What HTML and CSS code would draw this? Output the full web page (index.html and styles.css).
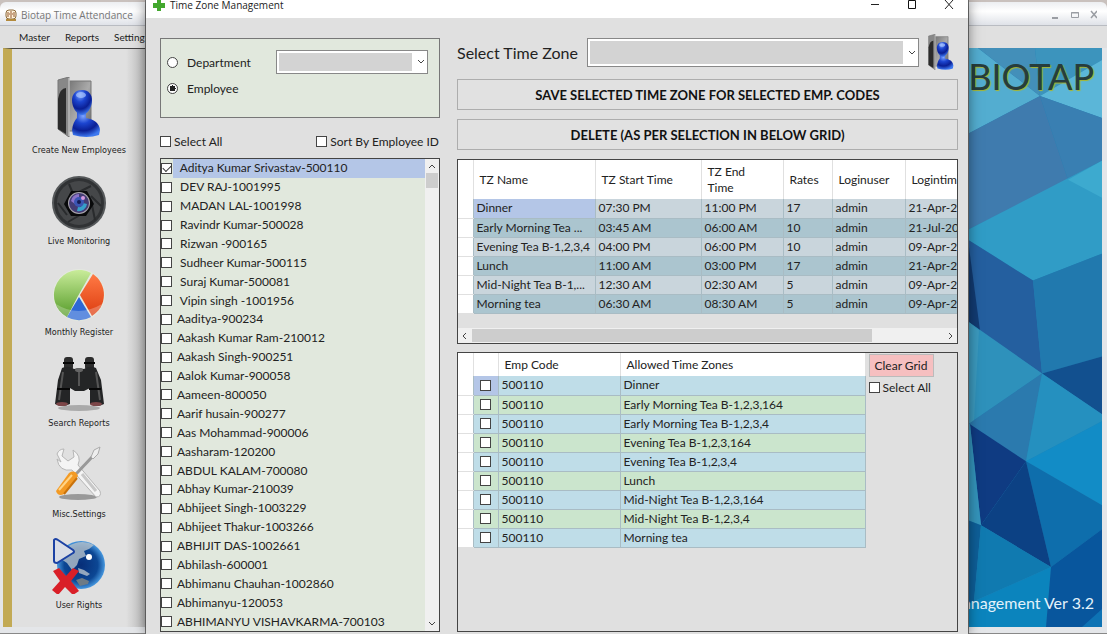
FILE: index.html
```html
<!DOCTYPE html>
<html lang="en">
<head>
    <meta charset="UTF-8">
    <meta name="viewport" content="width=device-width, initial-scale=1.0">
    <title>Time Zone Management</title>
    <link rel="stylesheet" href="styles.css">
</head>
<body>

    <!-- Shared icons -->
    <svg class="defs" width="0" height="0" aria-hidden="true">
        <defs>
            <linearGradient id="metal" x1="0" x2="1" y1="0" y2="1">
                <stop offset="0" stop-color="#777"/><stop offset=".5" stop-color="#aaa"/><stop offset="1" stop-color="#666"/>
            </linearGradient>
            <radialGradient id="blue" cx=".4" cy=".2" r=".8">
                <stop offset="0" stop-color="#7fa6ff"/><stop offset=".35" stop-color="#1c45d0"/><stop offset=".7" stop-color="#0a1f94"/><stop offset="1" stop-color="#3d78f0"/>
            </radialGradient>
        </defs>
        <symbol id="user" viewBox="0 0 44 60">
            <path d="M12 4H34V54H12z" fill="url(#metal)" stroke="#777"/>
            <path d="M1 3L12 0V60L1 52z" fill="#888" stroke="#777"/>
            <path d="M1 22Q3 11 9 11V57L1 52z" fill="#2b2b2b"/>
            <path d="M12 1V59" stroke="#ddd"/>
            <path d="M20 34h9v7q13 2 14 12l-1 5q-12 4-26 0l-1-5q1-8 5-12z" fill="url(#blue)"/>
            <path d="M25 13c7 0 10 5 10 10 0 8-5 15-10 15s-10-7-10-15c0-5 3-10 10-10z" fill="url(#blue)"/>
            <ellipse cx="24" cy="18" rx="5" ry="3" fill="#a9c4ff" opacity=".7"/>
        </symbol>
    </svg>

    <!-- Main application window -->
    <div class="app">
        <header class="app-title">
            <svg width="12" height="12" viewBox="0 0 12 12"><rect x="1" y="1" width="10" height="9" rx="3" fill="#fff3dc" stroke="#8b6a3c"/><path d="M3 3v5M6 2v7M9 3v5M4 5h1M7 5h1" stroke="#94572d"/><path d="M1 11h10" stroke="#b38a3d" stroke-width="2"/></svg>
            <span>Biotap Time Attendance</span>
            <svg class="app-controls" width="48" height="12" viewBox="0 0 48 12" fill="none" stroke="#9a9da3"><path d="M3 9h6" stroke-width="2"/><path d="M22.500 3.500h7v5h-7zM22 4h8"/><path d="M42 2l6 7M48 2l-6 7" stroke-width="1.500"/></svg>
        </header>
        <nav class="menu">
            <a href="#">Master</a>
            <a href="#">Reports</a>
            <a href="#">Settings</a>
        </nav>

        <div class="app-body">
            <aside class="sidebar">
                <button type="button">
                    <svg width="44" height="64" viewBox="0 0 44 64"><use href="#user" y="2" width="44" height="60"/></svg>
                    Create New Employees
                </button>
                <button type="button">
                    <svg width="56" height="64" viewBox="0 0 56 64">
                        <circle cx="28" cy="37" r="26" fill="#303234" stroke="#55585a" stroke-width="2"/>
                        <circle cx="28" cy="37" r="22" fill="#454749"/>
                        <path d="M18 18l5 12M40 20L28 26M50 40L40 30M44 54l-3-15M17 56l12-7M7 37l9 12" stroke="#292b2d" stroke-width="2"/>
                        <path d="M20 25h16l7 13-8 12H20l-7-12z" fill="#090a0b"/>
                        <circle cx="28" cy="37" r="11" fill="#a9a5ac"/><circle cx="28" cy="37" r="10" fill="#443c74"/>
                        <path d="M20 35a8 8 0 0 1 8-7v5a4 4 0 0 0-4 5z" fill="#8a72c9"/><path d="M36 38a8 8 0 0 1-10 7l1-4a4 4 0 0 0 5-4z" fill="#36a0c9"/>
                        <circle cx="28" cy="36" r="5" fill="#3b55b3"/><circle cx="28" cy="36" r="2" fill="#151b54"/><circle cx="32" cy="32" r="2" fill="#d69ae0"/>
                    </svg>
                    Live Monitoring
                </button>
                <button type="button">
                    <svg width="54" height="64" viewBox="-1 -2 54 64">
                        <linearGradient id="green" x2="0" y2="1"><stop offset="0" stop-color="#c9ec9a"/><stop offset="1" stop-color="#559b28"/></linearGradient>
                        <linearGradient id="orange" x2="0" y2="1"><stop offset="0" stop-color="#ff7a45"/><stop offset="1" stop-color="#dd3d10"/></linearGradient>
                        <circle cx="26" cy="36" r="26" fill="#e4e9df"/>
                        <path d="M25 37L38 14A25 25 0 1 0 14 58z" fill="url(#green)"/>
                        <path d="M27 36L40 15A25 25 0 0 1 39 57z" fill="url(#orange)"/>
                        <path d="M26 38L38 58A25 25 0 0 1 14 58z" fill="#2d68d5"/>
                        <path d="M3 45Q25 59 49 45Q44 60 26 61 9 60 3 45z" fill="#fff" opacity=".25"/>
                    </svg>
                    Monthly Register
                </button>
                <button type="button">
                    <svg width="52" height="64" viewBox="0 0 52 64">
                        <ellipse cx="26" cy="60" rx="21" ry="3" fill="#aaa"/>
                        <rect x="11" y="9" width="9" height="13" rx="3" fill="#2d2d2d"/><rect x="32" y="9" width="9" height="13" rx="3" fill="#2d2d2d"/>
                        <path d="M9 20q7-3 12 1l5-1 5 1q6-4 12-1l5 12 3 24q-7 4-14 0V40l-6 3h-9l-5-3v16q-8 4-15 0l3-24z" fill="#242526"/>
                        <path d="M10 24L6 52M26 21v17M43 24l4 28" stroke="#555" stroke-width="2" fill="none"/>
                        <path d="M10 15h11M31 15h11M4 41h13M36 41h12" stroke="#070707" stroke-width="2"/>
                        <ellipse cx="9" cy="56" rx="6" ry="2" fill="#7c4648"/><ellipse cx="43" cy="56" rx="6" ry="2" fill="#7c4648"/>
                        <ellipse cx="26" cy="22" rx="4" ry="2" fill="#666"/>
                    </svg>
                    Search Reports
                </button>
                <button type="button">
                    <svg width="48" height="64" viewBox="0 0 48 64">
                        <ellipse cx="23" cy="58" rx="19" ry="3" fill="#999"/>
                        <path d="M9 10l-2 7 6 5 6-4-1-7q9 6 5 15l22 26q2 6-4 6L17 31Q4 33 2 20l4 3-4-8q2-5 7-5z" fill="#f4f4f4" stroke="#b6b6b6"/>
                        <path d="M27 35l14 17" stroke="#c8c8c8" stroke-width="3"/>
                        <path d="M21 35L38 17" stroke="#999" stroke-width="3"/><path d="M36 18l3-7 6-3-2 7-5 5z" fill="#eee" stroke="#aaa"/>
                        <path d="M14 34q6-4 9 3L9 55q-6 3-8-3z" fill="#f39a24"/><path d="M17 36L4 51" stroke="#ffd486" stroke-width="2"/><path d="M22 39L9 55" stroke="#c9720b" stroke-width="2"/>
                    </svg>
                    Misc.Settings
                </button>
                <button type="button">
                    <svg width="54" height="64" viewBox="0 0 54 64">
                        <radialGradient id="globe"><stop offset="0" stop-color="#072e78"/><stop offset=".7" stop-color="#0c4794"/><stop offset="1" stop-color="#4798df"/></radialGradient>
                        <circle cx="29" cy="35" r="24" fill="url(#globe)"/>
                        <path d="M15 17Q29 8 42 15l-5 4-5 2 2 5-7 3-2 6-5 5-5-7-6-4zM26 38l6 2 6 4-3 2-8-3z" fill="#b5c2cc" opacity=".8"/>
                        <path d="M24 50l6-2 7 3-1 3-8 2z" fill="#6d7b86"/>
                        <circle cx="37" cy="27" r="3" fill="#fff"/>
                        <path d="M2 10q1-2 4 0l15 10q2 2 0 3L5 33q-3 0-3-2z" fill="#d9dde6" stroke="#1b41a4" stroke-width="2"/>
                        <path d="M1 41l6-3 7 8 7-8 6 3-8 10 8 10-6 4-8-8-7 8-6-5 8-9z" fill="#d91f28"/>
                    </svg>
                    User Rights
                </button>
            </aside>
            <section class="brand">
                <svg class="brand-art" viewBox="968 48 134 580" preserveAspectRatio="none">
                    <path d="M968 48h134v580H968z" fill="#2480b4"/>
                    <path d="M968 48h10l62 48-72 38z" fill="#53add0"/>
                    <path d="M978 48h57l5 48z" fill="#438fb9"/><path d="M1035 48h67v12l-62 36z" fill="#3c94bd"/>
                    <path d="M1102 60l-62 36 62 22z" fill="#5bb6d8"/>
                    <path d="M1040 96l-72 38v96l100-50z" fill="#3f7bae"/><path d="M1040 96l62 22v43l-34 19z" fill="#397fb2"/>
                    <path d="M968 230l134-69v93l-69 27-65-41z" fill="#309cc6"/><path d="M1068 180l34-19v37z" fill="#3daacf"/>
                    <path d="M968 240l65 41 9 93-64-44z" fill="#245f9f"/><path d="M968 240l12 91-12-9z" fill="#123b72"/>
                    <path d="M1033 281l69-27v103l-60 17z" fill="#2179ae"/><path d="M1042 374l60-17v58z" fill="#12508f"/>
                    <path d="M968 322l74 52-74 51z" fill="#2e91bb"/><path d="M979 331l-5 91-6 3V322z" fill="#3b99be"/>
                    <path d="M968 425l74-51-16 88z" fill="#2b7aae"/><path d="M1042 374l60 41v7l-76 40z" fill="#2590bf"/>
                    <path d="M1026 462l76-40v84z" fill="#128cc6"/><path d="M1026 462l76 44v24l-51 38z" fill="#0e6eac"/>
                    <path d="M970 425l56 37-45 64z" fill="#0f3b82"/><path d="M1026 462l25 106-70-42z" fill="#0c4184"/>
                    <path d="M968 425h2l11 101-13-5z" fill="#3494bb"/><path d="M968 521l13 5-7 76-6 3z" fill="#0e5f98"/>
                    <path d="M981 526l70 42-77 34z" fill="#107ab0"/><path d="M1051 568l-5 60h-78v-23z" fill="#0b84bd"/>
                    <path d="M1051 568l51-38v98h-56z" fill="#08569d"/><path d="M1102 610v18h-20z" fill="#0e73b4"/>
                </svg>
                <h1>BIOTAP</h1>
                <p>Management Ver 3.2</p>
            </section>
        </div>
    </div>

    <!-- Time zone dialog -->
    <main class="dialog">
        <header class="dialog-title">
            <svg width="12" height="18" viewBox="0 0 12 18"><path d="M4 0h4v3h4v5H8v3H4V8H0V3h4z" fill="#43a82e"/></svg>
            <h2>Time Zone Management</h2>
            <div class="dialog-controls">
                <button type="button" aria-label="Minimize"><svg width="10" height="10"><path d="M1 4.500h8" stroke="#222"/></svg></button>
                <button type="button" aria-label="Maximize"><svg width="10" height="10"><path d="M1.500 .500h7v8h-7z" fill="none" stroke="#111"/></svg></button>
                <button type="button" aria-label="Close"><svg width="10" height="10"><path d="M1 0l8 9M9 0L1 9" stroke="#222"/></svg></button>
            </div>
        </header>

        <div class="dialog-body">
            <section class="left">
                <div class="filter">
                    <div class="radios">
                        <label><input type="radio" name="by">Department</label>
                        <label><input type="radio" name="by" checked>Employee</label>
                    </div>
                    <div class="select">
                        <select aria-label="Department list"><option></option></select>
                        <svg width="8" height="6" viewBox="0 0 8 6"><path d="M1 1l3 3 3-3"/></svg>
                    </div>
                </div>
                <div class="checks">
                    <label><input type="checkbox">Select All</label>
                    <label><input type="checkbox">Sort By Employee ID</label>
                </div>
                <div class="list">
                    <div class="employees">
                        <label class="selected"><input type="checkbox" checked><span>&nbsp;Aditya Kumar Srivastav-500110</span></label>
                        <label><input type="checkbox"><span>&nbsp;DEV RAJ-1001995</span></label>
                        <label><input type="checkbox"><span>&nbsp;MADAN LAL-1001998</span></label>
                        <label><input type="checkbox"><span>&nbsp;Ravindr Kumar-500028</span></label>
                        <label><input type="checkbox"><span>&nbsp;Rizwan -900165</span></label>
                        <label><input type="checkbox"><span>&nbsp;Sudheer Kumar-500115</span></label>
                        <label><input type="checkbox"><span>&nbsp;Suraj Kumar-500081</span></label>
                        <label><input type="checkbox"><span>&nbsp;Vipin singh -1001956</span></label>
                        <label><input type="checkbox"><span>Aaditya-900234</span></label>
                        <label><input type="checkbox"><span>Aakash Kumar Ram-210012</span></label>
                        <label><input type="checkbox"><span>Aakash Singh-900251</span></label>
                        <label><input type="checkbox"><span>Aalok Kumar-900058</span></label>
                        <label><input type="checkbox"><span>Aameen-800050</span></label>
                        <label><input type="checkbox"><span>Aarif husain-900277</span></label>
                        <label><input type="checkbox"><span>Aas Mohammad-900006</span></label>
                        <label><input type="checkbox"><span>Aasharam-120200</span></label>
                        <label><input type="checkbox"><span>ABDUL KALAM-700080</span></label>
                        <label><input type="checkbox"><span>Abhay Kumar-210039</span></label>
                        <label><input type="checkbox"><span>Abhijeet Singh-1003229</span></label>
                        <label><input type="checkbox"><span>Abhijeet Thakur-1003266</span></label>
                        <label><input type="checkbox"><span>ABHIJIT DAS-1002661</span></label>
                        <label><input type="checkbox"><span>Abhilash-600001</span></label>
                        <label><input type="checkbox"><span>Abhimanu Chauhan-1002860</span></label>
                        <label><input type="checkbox"><span>Abhimanyu-120053</span></label>
                        <label><input type="checkbox"><span>ABHIMANYU VISHAVKARMA-700103</span></label>
                    </div>
                    <div class="vscroll">
                        <svg width="8" height="14" viewBox="0 0 8 14"><path d="M1 9l3-3 3 3"/></svg>
                        <div class="thumb"></div>
                        <svg width="8" height="14" viewBox="0 0 8 14"><path d="M1 5l3 3 3-3"/></svg>
                    </div>
                </div>
            </section>

            <section class="right">
                <div class="zone">
                    <label for="zone">Select Time Zone</label>
                    <div class="select">
                        <select id="zone"><option></option></select>
                        <svg width="8" height="6" viewBox="0 0 8 6"><path d="M1 1l3 3 3-3"/></svg>
                    </div>
                    <svg class="zone-user" width="26" height="36"><use href="#user" width="26" height="36"/></svg>
                </div>
                <button type="button" class="action">SAVE SELECTED TIME ZONE FOR SELECTED EMP. CODES</button>
                <button type="button" class="action">DELETE (AS PER SELECTION IN BELOW GRID)</button>

                <div class="grid zones">
                    <table>
                        <colgroup><col class="w-head"><col class="w-name"><col class="w-start"><col class="w-end"><col class="w-rates"><col class="w-user"><col class="w-time"></colgroup>
                        <thead>
                            <tr><th></th><th>TZ Name</th><th>TZ Start Time</th><th>TZ End<br>Time</th><th>Rates</th><th>Loginuser</th><th>Logintime</th></tr>
                        </thead>
                        <tbody>
                            <tr><td></td><td class="current">Dinner</td><td>07:30 PM</td><td>11:00 PM</td><td>17</td><td>admin</td><td>21-Apr-20</td></tr>
                            <tr><td></td><td>Early Morning Tea ...</td><td>03:45 AM</td><td>06:00 AM</td><td>10</td><td>admin</td><td>21-Jul-20</td></tr>
                            <tr><td></td><td>Evening Tea B-1,2,3,4</td><td>04:00 PM</td><td>06:00 PM</td><td>10</td><td>admin</td><td>09-Apr-20</td></tr>
                            <tr><td></td><td>Lunch</td><td>11:00 AM</td><td>03:00 PM</td><td>17</td><td>admin</td><td>21-Apr-20</td></tr>
                            <tr><td></td><td>Mid-Night Tea B-1,...</td><td>12:30 AM</td><td>02:30 AM</td><td>5</td><td>admin</td><td>09-Apr-20</td></tr>
                            <tr><td></td><td>Morning tea</td><td>06:30 AM</td><td>08:30 AM</td><td>5</td><td>admin</td><td>09-Apr-20</td></tr>
                        </tbody>
                    </table>
                    <div class="hscroll">
                        <svg width="14" height="8" viewBox="0 0 14 8"><path d="M8 1L5 4l3 3"/></svg>
                        <div class="track"><div class="thumb"></div></div>
                        <svg width="14" height="8" viewBox="0 0 14 8"><path d="M6 1l3 3-3 3"/></svg>
                    </div>
                </div>

                <div class="grid allowed">
                    <table>
                        <colgroup><col class="w-head"><col class="w-check"><col class="w-code"><col class="w-zone"></colgroup>
                        <thead>
                            <tr><th></th><th></th><th>Emp Code</th><th>Allowed Time Zones</th></tr>
                        </thead>
                        <tbody>
                            <tr><td></td><td class="current"><input type="checkbox" aria-label="Dinner"></td><td>500110</td><td>Dinner</td></tr>
                            <tr><td></td><td><input type="checkbox" aria-label="Early Morning Tea B-1,2,3,164"></td><td>500110</td><td>Early Morning Tea B-1,2,3,164</td></tr>
                            <tr><td></td><td><input type="checkbox" aria-label="Early Morning Tea B-1,2,3,4"></td><td>500110</td><td>Early Morning Tea B-1,2,3,4</td></tr>
                            <tr><td></td><td><input type="checkbox" aria-label="Evening Tea B-1,2,3,164"></td><td>500110</td><td>Evening Tea B-1,2,3,164</td></tr>
                            <tr><td></td><td><input type="checkbox" aria-label="Evening Tea B-1,2,3,4"></td><td>500110</td><td>Evening Tea B-1,2,3,4</td></tr>
                            <tr><td></td><td><input type="checkbox" aria-label="Lunch"></td><td>500110</td><td>Lunch</td></tr>
                            <tr><td></td><td><input type="checkbox" aria-label="Mid-Night Tea B-1,2,3,164"></td><td>500110</td><td>Mid-Night Tea B-1,2,3,164</td></tr>
                            <tr><td></td><td><input type="checkbox" aria-label="Mid-Night Tea B-1,2,3,4"></td><td>500110</td><td>Mid-Night Tea B-1,2,3,4</td></tr>
                            <tr><td></td><td><input type="checkbox" aria-label="Morning tea"></td><td>500110</td><td>Morning tea</td></tr>
                        </tbody>
                    </table>
                    <div class="grid-actions">
                        <button type="button">Clear Grid</button>
                        <label><input type="checkbox">Select All</label>
                    </div>
                </div>
            </section>
        </div>
    </main>

</body>
</html>
```
FILE: styles.css
```css
* {
    margin: 0;
    padding: 0;
    box-sizing: border-box;
}
body {
    position: relative;
    height: 100vh;
    overflow: hidden;
    font-family: Lato, Carlito, sans-serif;
    font-size: 12px;
    color: #222;
    background-color: #c9c1bd;
}
button, select, input {
    font: inherit;
    color: inherit;
}
.defs {
    position: absolute;
}

/* Application window */
.app {
    display: flex;
    flex-direction: column;
    height: 100vh;
    padding-top: 2px;
}
.app-title {
    display: flex;
    align-items: center;
    gap: 4px;
    height: 24px;
    padding: 3px 10px 0 5px;
    background: linear-gradient(#eceef1, #fff 40%, #dfe2e8);
    border-bottom: 1px solid #b9bcc2;
    border-radius: 6px 6px 0 0;
    font-family: "Open Sans", sans-serif;
    font-size: 10px;
    color: #777;
}
.app-controls {
    margin-left: auto;
}
.menu {
    display: flex;
    align-items: center;
    gap: 15px;
    height: 22px;
    padding-left: 19px;
    background-color: #e0e0e0;
    font-size: 10px;
}
.menu a {
    color: #222;
    text-decoration: none;
}
.app-body {
    display: flex;
    flex: 1;
    min-height: 0;
    padding: 0 5px 6px 3px;
    background-color: #e4e6e9;
    border-bottom: 1px solid #888;
}
.sidebar {
    width: 143px;
    padding-top: 26px;
    background: linear-gradient(90deg, #e0e0e0 85%, #bcbcbc);
    border-left: 9px solid #c2aa55;
    border-top: 1px solid #444;
}
.sidebar button {
    display: flex;
    flex-direction: column;
    align-items: center;
    gap: 4px;
    width: 100%;
    height: 91px;
    background: none;
    border: none;
    font-family: "DejaVu Sans Condensed", "DejaVu Sans", sans-serif;
    font-size: 9px;
    line-height: 14px;
    white-space: nowrap;
}
.brand {
    position: relative;
    flex: 1;
    display: flex;
    flex-direction: column;
    justify-content: space-between;
    align-items: flex-end;
    padding: 4px 8px 12px;
    background-color: #2480b4;
}
.brand-art {
    position: absolute;
    top: 0;
    right: 0;
    width: 134px;
    height: 100%;
}
.brand h1 {
    position: relative;
    font-size: 36px;
    font-weight: 400;
    line-height: 48px;
    color: #263c3d;
    text-shadow: 1px 1px 1px #a9b72e;
}
.brand p {
    position: relative;
    font-size: 16px;
    line-height: 24px;
    color: #e3f2fb;
}

/* Dialog */
.dialog {
    position: absolute;
    top: 0;
    bottom: 0;
    left: 146px;
    right: 139px;
    display: flex;
    flex-direction: column;
    background-color: #e0e0e0;
    box-shadow: 0 0 12px rgba(0, 0, 0, 0.5), 0 0 0 1px #777;
}
.dialog-title {
    display: flex;
    gap: 5px;
    height: 18px;
    padding: 0 14px 0 7px;
    background-color: #fff;
}
.dialog-title h2 {
    font-family: "Open Sans", sans-serif;
    font-size: 10px;
    font-weight: 400;
    line-height: 10px;
}
.dialog-controls {
    display: flex;
    align-items: flex-start;
    gap: 27px;
    margin-left: auto;
}
.dialog-controls button {
    height: 10px;
    width: 10px;
    background: none;
    border: none;
}
.dialog-controls svg {
    display: block;
}
.dialog-body {
    flex: 1;
    min-height: 0;
    display: grid;
    grid-template-columns: 280px 1fr;
    gap: 17px;
    padding: 20px 10px 2px 14px;
}
.left, .right {
    display: flex;
    flex-direction: column;
    min-width: 0;
    min-height: 0;
}
label {
    display: flex;
    align-items: center;
}
input[type="checkbox"], input[type="radio"] {
    appearance: none;
    flex: none;
    width: 11px;
    height: 11px;
    background-color: #fff;
    border: 1px solid #444;
}
input[type="radio"] {
    border-radius: 50%;
}
input[type="radio"]:checked {
    background: radial-gradient(circle, #222 0 3px, #fff 3px);
}
input[type="checkbox"]:checked::after {
    content: "";
    display: block;
    width: 7px;
    height: 4px;
    margin: 1px;
    border: solid #333;
    border-width: 0 0 1px 1px;
    transform: rotate(-45deg);
}
.filter {
    display: flex;
    justify-content: space-between;
    height: 80px;
    padding: 11px 11px 0 6px;
    background-color: #e1e8dd;
    border: 1px solid #777;
}
.radios label {
    gap: 9px;
    height: 28px;
}
.radios label:first-child {
    height: 24px;
}
.select {
    position: relative;
    width: 152px;
    height: 24px;
}
.select select {
    appearance: none;
    display: block;
    width: 100%;
    height: 100%;
    padding: 2px 15px 2px 2px;
    background-color: #d3d3d3;
    background-clip: content-box;
    box-shadow: inset 0 0 0 2px #fff, inset -15px 0 #fff;
    border: 1px solid #888;
    border-radius: 0;
}
.select svg {
    position: absolute;
    right: 3px;
    top: calc(50% - 3px);
}
.select path, .vscroll path, .hscroll path {
    fill: none;
    stroke: #444;
}
.checks {
    display: flex;
    justify-content: space-between;
    align-items: center;
    height: 40px;
    padding: 6px 1px 0 0;
}
.checks label, .grid-actions label {
    gap: 3px;
}
.list {
    flex: 1;
    min-height: 0;
    display: flex;
    border: 1px solid #444;
    background-color: #e1e8dd;
}
.employees {
    flex: 1;
    display: grid;
    grid-auto-rows: 1fr;
}
.employees label {
    gap: 1px;
    min-height: 0;
    line-height: 16px;
}
.employees span {
    flex: 1;
    align-self: stretch;
    display: flex;
    align-items: center;
    padding-left: 4px;
}
.employees .selected span {
    background-color: #b4c6e7;
}
.vscroll {
    display: flex;
    flex-direction: column;
    align-items: center;
    width: 14px;
    background-color: #f0f0f0;
}
.vscroll .thumb {
    width: 12px;
    height: 15px;
    margin-bottom: auto;
    background-color: #cdcdcd;
}

/* Right side */
.zone {
    display: flex;
    height: 41px;
}
.zone label {
    width: 130px;
    height: 28px;
    font-size: 16px;
}
.zone .select {
    flex: 1;
    height: 29px;
}
.zone-user {
    margin: -4px 4px 0 9px;
}
.action {
    height: 31px;
    margin-bottom: 9px;
    background-color: #e1e1e1;
    border: 1px solid #adadad;
    font-size: 13px;
    font-weight: 700;
    color: #111;
}
.grid {
    border: 1px solid #444;
    overflow: hidden;
}
.zones {
    height: 185px;
    margin-bottom: 8px;
    display: flex;
    flex-direction: column;
}
.allowed {
    flex: 1;
    min-height: 0;
    display: flex;
    align-items: flex-start;
}
table {
    flex: none;
    border-collapse: collapse;
    table-layout: fixed;
    width: 0;
}
.w-head { width: 15px; }
.w-name { width: 122px; }
.w-start { width: 106px; }
.w-end { width: 82px; }
.w-rates { width: 49px; }
.w-user { width: 73px; }
.w-time { width: 90px; }
.w-check { width: 25px; }
.w-code { width: 122px; }
.w-zone { width: 245px; }
th {
    height: 23px;
    padding: 0 6px;
    background-color: #fff;
    border-right: 1px solid #e0e0e0;
    font-weight: 400;
    line-height: 16px;
    text-align: left;
}
.zones th {
    height: 39px;
}
td {
    height: 19px;
    padding: 0 3px;
    border-right: 1px solid #a9bcc4;
    border-bottom: 1px solid #a9bcc4;
    line-height: 16px;
    white-space: nowrap;
}
.zones td { background-color: #c9d5dc; }
.zones tr:nth-child(even) td { background-color: #abc5cf; }
.allowed td { background-color: #bfdde8; }
.allowed tr:nth-child(even) td { background-color: #cbe5cd; }
.grid tbody tr td:first-child {
    background-color: #fff;
    border-bottom-color: #e0e0e0;
}
.grid tbody tr .current {
    background-color: #b4c6e7;
}
td input {
    display: block;
    margin: 0 auto;
}
.hscroll {
    display: flex;
    align-items: center;
    height: 15px;
    margin-top: auto;
    background-color: #f0f0f0;
}
.track {
    flex: 1;
    height: 13px;
}
.hscroll .thumb {
    width: 85%;
    height: 100%;
    background-color: #cdcdcd;
}
.grid-actions {
    padding: 1px 0 0 3px;
}
.grid-actions button {
    width: 65px;
    height: 23px;
    margin-bottom: 3px;
    background-color: #f6bfc0;
    border: 1px solid #bbb;
}
```
